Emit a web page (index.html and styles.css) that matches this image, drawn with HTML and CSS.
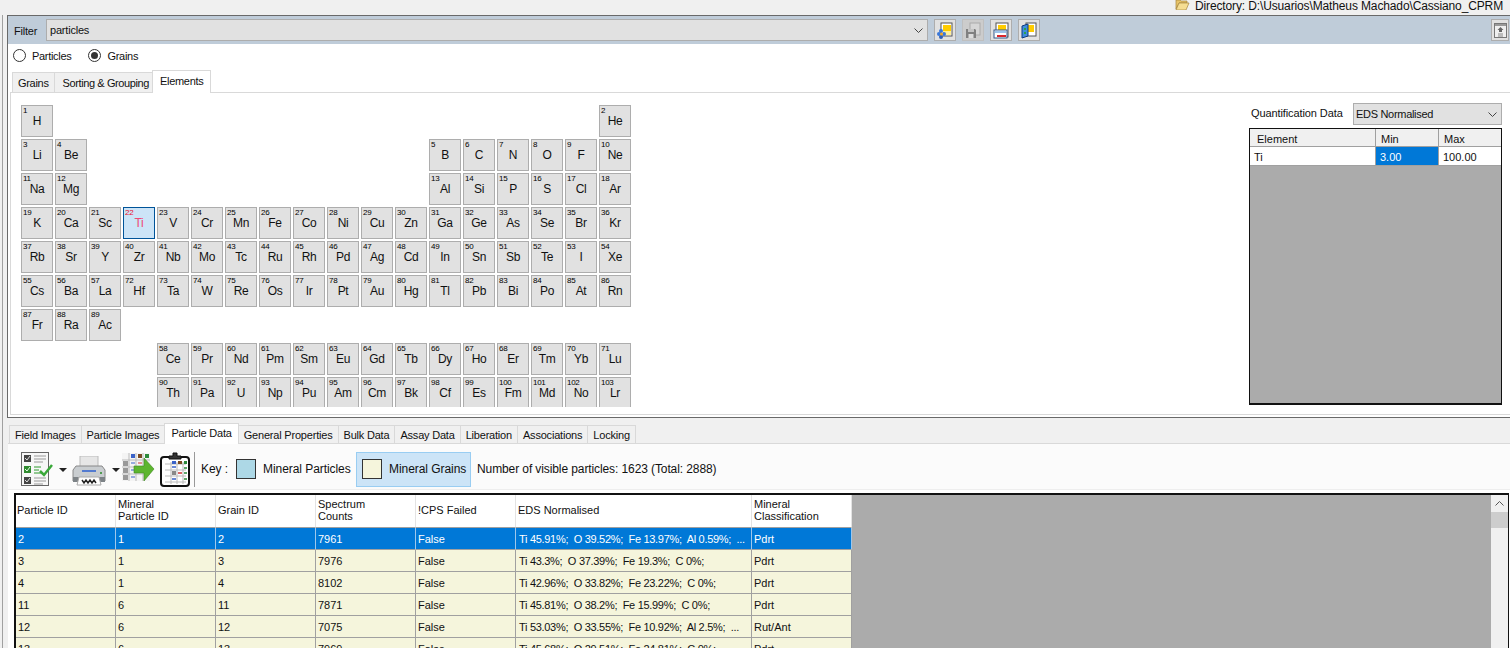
FILE: index.html
```html
<!DOCTYPE html>
<html>
<head>
<meta charset="utf-8">
<title>Particle Data</title>
<link rel="stylesheet" href="styles.css">
</head>
<body>
<div class="topstrip">
  <svg class="folder" width="15" height="10" viewBox="0 0 15 10"><path d="M1 0h4l1 1h6v2H4L1 9z" fill="#e8c468" stroke="#a5853c" stroke-width=".7"/><path d="M1 10l3-7h10l-3 7z" fill="#f5dd92" stroke="#a5853c" stroke-width=".7"/></svg>
  <span>Directory: D:\Usuarios\Matheus Machado\Cassiano_CPRM</span>
</div>
<div class="main">
  <section class="upper">
    <div class="filterbar">
      <span class="filterlabel">Filter</span>
      <div class="combo filtercombo"><span>particles</span>
        <svg class="chev" width="9" height="5" viewBox="0 0 9 5"><path d="M.5.5l4 4 4-4" fill="none" stroke="#444"/></svg>
      </div>
      <button class="toolbtn">
        <svg width="16" height="17" viewBox="0 0 16 17"><rect x="4" y="1" width="11" height="13" fill="#fff" stroke="#555"/><rect x="6" y="3" width="8" height="6" fill="#fc0"/><rect x="6" y="9" width="8" height="4" fill="#fe9"/><circle cx="4" cy="9" r="2" fill="#3a78d8"/><circle cx="7" cy="12" r="2" fill="#3a78d8"/><circle cx="4" cy="15" r="2" fill="#2e5fb8"/><circle cx="2" cy="12" r="2" fill="#3a78d8"/><circle cx="4.500" cy="12" r="1.500" fill="#f6a623"/></svg>
      </button>
      <button class="toolbtn off">
        <svg width="16" height="17" viewBox="0 0 16 17"><rect x="5" y="1" width="10" height="12" fill="#d6d6d6" stroke="#aaa"/><path d="M1 7h9l1 1v8H1z" fill="#808080"/><rect x="3" y="7" width="6" height="3" fill="#c4c4c4"/><rect x="3.500" y="12" width="5" height="4" fill="#ddd"/></svg>
      </button>
      <button class="toolbtn">
        <svg width="16" height="17" viewBox="0 0 16 17"><rect x="3" y="1" width="12" height="14" fill="#fff" stroke="#555"/><rect x="5" y="3" width="8" height="5" fill="#fc0"/><rect x="1" y="8" width="13" height="8" fill="#fff" stroke="#33588c"/><rect x="2" y="9" width="11" height="2" fill="#9cc3ea"/><rect x="4" y="13" width="9" height="2" fill="#d8262c"/></svg>
      </button>
      <button class="toolbtn">
        <svg width="16" height="17" viewBox="0 0 16 17"><rect x="5" y="1" width="10" height="13" fill="#fff" stroke="#555"/><rect x="7" y="3" width="6" height="7" fill="#fc0"/><path d="M1 4l6-2v12l-6 2z" fill="#3f8edc" stroke="#0f3a80"/><rect x="3" y="6" width="2" height="2" fill="#2aa34a"/><rect x="3" y="10" width="2" height="2" fill="#2aa34a"/></svg>
      </button>
      <button class="toolbtn collapse">
        <svg width="13" height="15" viewBox="0 0 13 15"><rect x=".5" y=".5" width="12" height="14" fill="#efefef" stroke="#777"/><rect x="1" y="1" width="11" height="2" fill="#999"/><path d="M6.500 4l3 3H8v2H5V7H3.500z" fill="#666"/><path d="M4 11h5M4 13h5" stroke="#888"/></svg>
      </button>
    </div>

    <div class="radios">
      <label class="radio"><i class="dot"></i>Particles</label>
      <label class="radio"><i class="dot checked"></i>Grains</label>
    </div>

    <div class="tabs uppertabs">
      <span class="tab">Grains</span>
      <span class="tab">Sorting &amp; Grouping</span>
      <span class="tab active">Elements</span>
    </div>

    <div class="page">
      <div class="ptable">
        <div class="ptrow"><b class="el"><i>1</i>H</b><b class="el skip-he"><i>2</i>He</b></div>
        <div class="ptrow"><b class="el"><i>3</i>Li</b><b class="el"><i>4</i>Be</b><b class="el skip-b"><i>5</i>B</b><b class="el"><i>6</i>C</b><b class="el"><i>7</i>N</b><b class="el"><i>8</i>O</b><b class="el"><i>9</i>F</b><b class="el"><i>10</i>Ne</b></div>
        <div class="ptrow"><b class="el"><i>11</i>Na</b><b class="el"><i>12</i>Mg</b><b class="el skip-b"><i>13</i>Al</b><b class="el"><i>14</i>Si</b><b class="el"><i>15</i>P</b><b class="el"><i>16</i>S</b><b class="el"><i>17</i>Cl</b><b class="el"><i>18</i>Ar</b></div>
        <div class="ptrow"><b class="el"><i>19</i>K</b><b class="el"><i>20</i>Ca</b><b class="el"><i>21</i>Sc</b><b class="el picked"><i>22</i>Ti</b><b class="el"><i>23</i>V</b><b class="el"><i>24</i>Cr</b><b class="el"><i>25</i>Mn</b><b class="el"><i>26</i>Fe</b><b class="el"><i>27</i>Co</b><b class="el"><i>28</i>Ni</b><b class="el"><i>29</i>Cu</b><b class="el"><i>30</i>Zn</b><b class="el"><i>31</i>Ga</b><b class="el"><i>32</i>Ge</b><b class="el"><i>33</i>As</b><b class="el"><i>34</i>Se</b><b class="el"><i>35</i>Br</b><b class="el"><i>36</i>Kr</b></div>
        <div class="ptrow"><b class="el"><i>37</i>Rb</b><b class="el"><i>38</i>Sr</b><b class="el"><i>39</i>Y</b><b class="el"><i>40</i>Zr</b><b class="el"><i>41</i>Nb</b><b class="el"><i>42</i>Mo</b><b class="el"><i>43</i>Tc</b><b class="el"><i>44</i>Ru</b><b class="el"><i>45</i>Rh</b><b class="el"><i>46</i>Pd</b><b class="el"><i>47</i>Ag</b><b class="el"><i>48</i>Cd</b><b class="el"><i>49</i>In</b><b class="el"><i>50</i>Sn</b><b class="el"><i>51</i>Sb</b><b class="el"><i>52</i>Te</b><b class="el"><i>53</i>I</b><b class="el"><i>54</i>Xe</b></div>
        <div class="ptrow"><b class="el"><i>55</i>Cs</b><b class="el"><i>56</i>Ba</b><b class="el"><i>57</i>La</b><b class="el"><i>72</i>Hf</b><b class="el"><i>73</i>Ta</b><b class="el"><i>74</i>W</b><b class="el"><i>75</i>Re</b><b class="el"><i>76</i>Os</b><b class="el"><i>77</i>Ir</b><b class="el"><i>78</i>Pt</b><b class="el"><i>79</i>Au</b><b class="el"><i>80</i>Hg</b><b class="el"><i>81</i>Tl</b><b class="el"><i>82</i>Pb</b><b class="el"><i>83</i>Bi</b><b class="el"><i>84</i>Po</b><b class="el"><i>85</i>At</b><b class="el"><i>86</i>Rn</b></div>
        <div class="ptrow"><b class="el"><i>87</i>Fr</b><b class="el"><i>88</i>Ra</b><b class="el"><i>89</i>Ac</b></div>
        <div class="ptrow"><b class="el skip-la"><i>58</i>Ce</b><b class="el"><i>59</i>Pr</b><b class="el"><i>60</i>Nd</b><b class="el"><i>61</i>Pm</b><b class="el"><i>62</i>Sm</b><b class="el"><i>63</i>Eu</b><b class="el"><i>64</i>Gd</b><b class="el"><i>65</i>Tb</b><b class="el"><i>66</i>Dy</b><b class="el"><i>67</i>Ho</b><b class="el"><i>68</i>Er</b><b class="el"><i>69</i>Tm</b><b class="el"><i>70</i>Yb</b><b class="el"><i>71</i>Lu</b></div>
        <div class="ptrow"><b class="el skip-la"><i>90</i>Th</b><b class="el"><i>91</i>Pa</b><b class="el"><i>92</i>U</b><b class="el"><i>93</i>Np</b><b class="el"><i>94</i>Pu</b><b class="el"><i>95</i>Am</b><b class="el"><i>96</i>Cm</b><b class="el"><i>97</i>Bk</b><b class="el"><i>98</i>Cf</b><b class="el"><i>99</i>Es</b><b class="el"><i>100</i>Fm</b><b class="el"><i>101</i>Md</b><b class="el"><i>102</i>No</b><b class="el"><i>103</i>Lr</b></div>
      </div>

      <div class="quant">
        <div class="quanthead">
          <span>Quantification Data</span>
          <div class="combo quantcombo"><span>EDS Normalised</span>
            <svg class="chev" width="9" height="5" viewBox="0 0 9 5"><path d="M.5.5l4 4 4-4" fill="none" stroke="#444"/></svg>
          </div>
        </div>
        <div class="quantgrid">
          <div class="qrow qhead"><span>Element</span><span>Min</span><span>Max</span></div>
          <div class="qrow"><span>Ti</span><span class="sel">3.00</span><span>100.00</span></div>
        </div>
      </div>
    </div>
  </section>

  <section class="lower">
    <div class="tabs lowertabs">
      <span class="tab">Field Images</span>
      <span class="tab">Particle Images</span>
      <span class="tab active">Particle Data</span>
      <span class="tab">General Properties</span>
      <span class="tab">Bulk Data</span>
      <span class="tab">Assay Data</span>
      <span class="tab">Liberation</span>
      <span class="tab">Associations</span>
      <span class="tab">Locking</span>
    </div>
    <div class="lowerpage">
      <div class="toolbar">
        <svg class="ic-check" width="32" height="34" viewBox="0 0 32 34">
          <rect x=".5" y=".5" width="27" height="33" fill="#f7f7f7" stroke="#666"/>
          <rect x="3" y="3" width="7" height="7" fill="#444"/><path d="M4 6l2 2 3-4" stroke="#ddd" fill="none"/>
          <path d="M13 4h12M13 7h12M13 10h9" stroke="#999"/>
          <rect x="3" y="14" width="7" height="7" fill="#2f8a2f"/><path d="M4 17l2 2 3-4" stroke="#e6ffe6" fill="none"/>
          <path d="M13 15h7M13 18h5M13 21h7" stroke="#2c9a2c"/>
          <path d="M19 19l4 4 8-10" stroke="#39a839" stroke-width="2.500" fill="none"/>
          <rect x="3" y="25" width="7" height="7" fill="#444"/><path d="M4 28l2 2 3-4" stroke="#ddd" fill="none"/>
          <path d="M13 26h12M13 29h12M13 32h9" stroke="#999"/>
        </svg>
        <i class="caret first"></i>
        <svg class="ic-print" width="34" height="30" viewBox="0 0 34 30">
          <rect x="8" y="0" width="18" height="11" fill="#e6e6e6" stroke="#bbb"/>
          <path d="M4 10h26l3 4v11H1V14z" fill="#c9cdd0" stroke="#888"/>
          <rect x="1" y="21" width="32" height="5" fill="#7d8387"/>
          <path d="M10 15h14" stroke="#2b5fd0" stroke-width="1.500"/>
          <circle cx="29" cy="17" r="1" fill="#2b8a2b"/>
          <path d="M7 21h20l2 8H5z" fill="#fff" stroke="#aaa"/>
          <path d="M10 24l2 3 2-3 2 3 2-3 2 3 2-3 2 3" stroke="#222" stroke-width="1.500" fill="none"/>
        </svg>
        <i class="caret second"></i>
        <svg class="ic-export" width="33" height="33" viewBox="0 0 33 33">
          <rect x="0" y="0" width="28" height="28" fill="#f4f4f4"/>
          <path d="M0 7h28M0 14h28M0 21h28M7 0v28M14 0v28M21 0v28" stroke="#bbb"/>
          <rect x="9" y="1" width="4" height="4" fill="#3a62c8"/><rect x="16" y="1" width="4" height="4" fill="#7a4a20"/><rect x="23" y="1" width="4" height="4" fill="#2c8a3a"/>
          <rect x="1" y="8" width="5" height="5" fill="#999"/><rect x="1" y="15" width="5" height="5" fill="#999"/><rect x="1" y="22" width="5" height="5" fill="#999"/>
          <path d="M9 10h4M9 17h4M9 24h4" stroke="#3a62c8"/><path d="M16 10h4" stroke="#c33"/>
          <path d="M12 13h10V5l10 11-10 12v-8H12z" fill="#5db52f" stroke="#3d8a1e" stroke-width=".6"/>
        </svg>
        <svg class="ic-clip" width="30" height="35" viewBox="0 0 30 35">
          <rect x="1" y="5" width="28" height="29" rx="3" fill="#fff" stroke="#111" stroke-width="2"/>
          <path d="M9 6V4h4V1h4v3h4v3H9z" fill="#333" stroke="#111"/>
          <path d="M5 12h21M5 18h21M5 24h21M5 30h21M11 10v22M17 10v22M23 10v22" stroke="#bbb"/>
          <rect x="12" y="9" width="4" height="3" fill="#3a62c8"/><rect x="18" y="9" width="4" height="3" fill="#7a4a20"/><rect x="24" y="9" width="3" height="3" fill="#2c8a3a"/>
          <rect x="12" y="19" width="4" height="4" fill="#888"/><path d="M18 21h4" stroke="#c33" stroke-width="1.500"/><path d="M12 27h4M12 15h4" stroke="#3a62c8" stroke-width="1.500"/><path d="M24 16h3M24 21h3M24 27h3" stroke="#2c8a3a" stroke-width="1.500"/>
        </svg>
        <i class="sep"></i>
        <span class="keylabel">Key :</span>
        <div class="keyitem"><i class="swatch blue"></i><span>Mineral Particles</span></div>
        <div class="keyitem hot"><i class="swatch beige"></i><span>Mineral Grains</span></div>
        <span class="counts">Number of visible particles: 1623 (Total: 2888)</span>
      </div>

      <div class="gridwrap">
        <table class="grid">
          <colgroup><col class="w100"><col class="w100"><col class="w100"><col class="w100"><col class="w100"><col class="w236"><col class="w100"></colgroup>
          <thead>
            <tr><th>Particle ID</th><th>Mineral<br>Particle ID</th><th>Grain ID</th><th>Spectrum<br>Counts</th><th>!CPS Failed</th><th>EDS Normalised</th><th>Mineral<br>Classification</th></tr>
          </thead>
          <tbody>
            <tr class="selrow"><td>2</td><td>1</td><td>2</td><td>7961</td><td>False</td><td class="eds">Ti 45.91%;&nbsp; O 39.52%;&nbsp; Fe 13.97%;&nbsp; Al 0.59%;&nbsp; ...</td><td>Pdrt</td></tr>
            <tr><td>3</td><td>1</td><td>3</td><td>7976</td><td>False</td><td class="eds">Ti 43.3%;&nbsp; O 37.39%;&nbsp; Fe 19.3%;&nbsp; C 0%;</td><td>Pdrt</td></tr>
            <tr><td>4</td><td>1</td><td>4</td><td>8102</td><td>False</td><td class="eds">Ti 42.96%;&nbsp; O 33.82%;&nbsp; Fe 23.22%;&nbsp; C 0%;</td><td>Pdrt</td></tr>
            <tr><td>11</td><td>6</td><td>11</td><td>7871</td><td>False</td><td class="eds">Ti 45.81%;&nbsp; O 38.2%;&nbsp; Fe 15.99%;&nbsp; C 0%;</td><td>Pdrt</td></tr>
            <tr><td>12</td><td>6</td><td>12</td><td>7075</td><td>False</td><td class="eds">Ti 53.03%;&nbsp; O 33.55%;&nbsp; Fe 10.92%;&nbsp; Al 2.5%;&nbsp; ...</td><td>Rut/Ant</td></tr>
            <tr><td>13</td><td>6</td><td>13</td><td>7969</td><td>False</td><td class="eds">Ti 45.68%;&nbsp; O 29.51%;&nbsp; Fe 24.81%;&nbsp; C 0%;</td><td>Pdrt</td></tr>
          </tbody>
        </table>
        <div class="vscroll">
          <svg width="9" height="5" viewBox="0 0 9 5"><path d="M.5 4.500l4-4 4 4" fill="none" stroke="#555"/></svg>
          <i class="thumb"></i>
        </div>
      </div>
    </div>
  </section>
</div>
</body>
</html>
```

FILE: styles.css
```css
* {
  margin: 0;
  padding: 0;
  box-sizing: border-box;
}
html, body {
  width: 1510px;
  height: 648px;
  overflow: hidden;
}
body {
  background: #f0f0f0;
  font-family: "Liberation Sans", Arial, sans-serif;
  font-size: 11px;
  color: #111;
  display: flex;
  flex-direction: column;
}
i, b {
  font-style: normal;
  font-weight: normal;
}

/* top strip */
.topstrip {
  height: 15px;
  display: flex;
  justify-content: flex-end;
  align-items: center;
  gap: 5px;
  padding-right: 7px;
  font-size: 12px;
  line-height: 11px;
  letter-spacing: -0.13px;
  overflow: hidden;
}
.folder {
  margin-bottom: 5px;
}
.topstrip span {
  margin-bottom: 3px;
}

.main {
  flex: 1;
  min-height: 0;
  margin-left: 2px;
  padding-left: 4px;
  border-left: 1px solid #a0a0a0;
  display: flex;
  flex-direction: column;
}

/* upper panel */
.upper {
  height: 403px;
  flex: none;
  background: #fff;
  border: 1px solid #696969;
  border-right: 0;
  display: flex;
  flex-direction: column;
}
.filterbar {
  height: 28px;
  flex: none;
  background: #bfccd9;
  display: flex;
  align-items: flex-start;
  padding: 3px 1px 0 6px;
}
.filterlabel {
  width: 32px;
  padding-top: 6px;
  letter-spacing: -0.2px;
}
.combo {
  height: 22px;
  background: #e1e1e1;
  border: 1px solid #adadad;
  display: flex;
  align-items: center;
  justify-content: space-between;
  padding: 0 4px 0 2px;
}
.filtercombo {
  width: 882px;
  margin-right: 6px;
  letter-spacing: -0.2px;
}
.filtercombo span {
  margin-bottom: 1px;
  margin-left: 1px;
}
.toolbtn {
  width: 22px;
  height: 22px;
  margin-right: 6px;
  background: #e1e1e1;
  border: 1px solid #adadad;
  display: flex;
  align-items: center;
  justify-content: center;
}
.toolbtn.off {
  background: #ccc;
  border-color: #bfbfbf;
}
.toolbtn.collapse {
  width: 18px;
  margin: 0 0 0 auto;
}

.radios {
  height: 25px;
  flex: none;
  display: flex;
  align-items: center;
  padding: 0 0 2px 5px;
  letter-spacing: -0.3px;
}
.radio {
  display: flex;
  align-items: center;
  gap: 6px;
  margin-right: 17px;
}
.dot {
  width: 13px;
  height: 13px;
  border: 1px solid #333;
  border-radius: 50%;
  background: #fff;
  display: flex;
  align-items: center;
  justify-content: center;
}
.dot.checked::after {
  content: "";
  width: 7px;
  height: 7px;
  border-radius: 50%;
  background: #333;
}

/* tabs */
.tabs {
  display: flex;
  align-items: flex-end;
  flex: none;
  letter-spacing: -0.3px;
}
.tab {
  height: 20px;
  padding: 4px 5px 0;
  background: #f0f0f0;
  border: 1px solid #d9d9d9;
  border-bottom: 0;
  border-left: 0;
  white-space: nowrap;
}
.tab:first-child {
  border-left: 1px solid #d9d9d9;
}
.tab.active {
  height: 23px;
  padding: 4px 7px 0;
  margin-left: -1px;
  background: #fff;
  border-left: 1px solid #d9d9d9;
  position: relative;
  top: 1px;
}
.uppertabs {
  height: 23px;
  padding-left: 4px;
}
.uppertabs .tab:nth-child(2) {
  padding: 4px 3px 0 8px;
  letter-spacing: -0.4px;
}
.page {
  flex: 1;
  margin: 0 0 2px 2px;
  min-height: 0;
  border: 1px solid #d9d9d9;
  border-right: 0;
  display: flex;
  justify-content: space-between;
  padding: 12px 8px 0 10px;
}

/* periodic table */
.ptable {
  height: 302px;
  overflow: hidden;
  display: flex;
  flex-direction: column;
  gap: 2px;
}
.ptrow {
  display: flex;
  gap: 2px;
  flex: none;
  height: 32px;
}
.el {
  width: 32px;
  height: 32px;
  position: relative;
  background: #e1e1e1;
  border: 1px solid #adadad;
  display: flex;
  align-items: center;
  justify-content: center;
  font-size: 12px;
  letter-spacing: -0.3px;
}
.el i {
  position: absolute;
  left: 1px;
  top: 1px;
  font-size: 8px;
  line-height: 8px;
  color: #000;
}
.el.picked {
  background: #cce4f7;
  border-color: #005499;
  color: #ee4a76;
}
.el.picked i {
  color: #e8112d;
}
.skip-he {
  margin-left: 544px;
}
.skip-b {
  margin-left: 340px;
}
.skip-la {
  margin-left: 136px;
}

/* quantification */
.quant {
  width: 253px;
}
.quanthead {
  display: flex;
  align-items: center;
  justify-content: space-between;
  padding-left: 2px;
  margin-top: -2px;
  height: 22px;
}
.quanthead > span {
  margin-bottom: 2px;
  letter-spacing: -0.1px;
}
.quantcombo {
  width: 149px;
  letter-spacing: -0.3px;
}
.quantgrid {
  margin-top: 3px;
  width: 253px;
  height: 277px;
  background: #ababab;
  border: 2px solid #111;
  border-width: 1px 1px 2px 1px;
}
.qrow {
  display: grid;
  grid-template-columns: 125px 63px 63px;
  background: #fff;
  height: 19px;
  border-bottom: 1px solid #a0a0a0;
  align-items: stretch;
}
.qrow span {
  padding: 4px 4px 0;
}
.qrow span + span {
  border-left: 1px solid #a0a0a0;
}
.qhead {
  background: #f0f0f0;
  height: 18px;
}
.qhead span:first-child {
  padding-left: 7px;
}
.qhead span + span {
  padding-left: 5px;
}
.qrow .sel {
  background: #0078d7;
  color: #fff;
}

/* lower panel */
.lower {
  flex: 1;
  min-height: 0;
  display: flex;
  flex-direction: column;
  padding: 5px 0 0 1px;
}
.lowertabs {
  height: 20px;
  padding-left: 1px;
  letter-spacing: -0.2px;
}
.lowertabs .tab {
  height: 18px;
  padding-top: 3px;
}
.lowertabs .tab.active {
  height: 21px;
  padding-left: 6px;
  padding-right: 6px;
}
.lowerpage {
  flex: 1;
  min-height: 0;
  background: #fff;
  border-top: 1px solid #d9d9d9;
  display: flex;
  flex-direction: column;
}
.toolbar {
  height: 46px;
  flex: none;
  background: #fbfbfb;
  border-bottom: 1px solid #eee;
  display: flex;
  align-items: center;
  padding: 5px 0 0 13px;
  font-size: 12px;
  letter-spacing: -0.06px;
}
.caret {
  width: 0;
  height: 0;
  border: 4px solid transparent;
  border-top-color: #222;
  border-bottom: 0;
  margin-top: 1px;
}
.caret.first {
  margin-left: 6px;
  margin-right: 5px;
}
.caret.second {
  margin-left: 6px;
  margin-right: 2px;
}
.ic-print {
  margin-top: 4px;
}
.ic-export {
  margin-right: 5px;
}
.sep {
  width: 1px;
  height: 35px;
  background: #999;
  margin: 0 6px 0 4px;
}
.keylabel {
  width: 30px;
}
.keyitem {
  height: 35px;
  display: flex;
  align-items: center;
  gap: 7px;
  padding: 0 0 0 4px;
  width: 125px;
  border: 1px solid transparent;
}
.keyitem.hot {
  background: #cce4f7;
  border-color: #99cdf2;
  width: 115px;
  padding-left: 5px;
}
.swatch {
  width: 20px;
  height: 20px;
  border: 1px solid #333;
}
.swatch.blue {
  background: #add8e6;
}
.swatch.beige {
  background: #f5f5dc;
}
.counts {
  margin-left: 6px;
  letter-spacing: -0.1px;
}

/* data grid */
.gridwrap {
  flex: 1;
  min-height: 0;
  margin: 3px 1px 0 6px;
  background: #ababab;
  border-top: 2px solid #111;
  border-left: 2px solid #111;
  border-right: 1px solid #111;
  display: flex;
  justify-content: space-between;
  overflow: hidden;
}
.grid {
  table-layout: fixed;
  border-collapse: separate;
  border-spacing: 0;
  width: 836px;
  height: max-content;
  background: #f5f5dc;
}
.w100 {
  width: 100px;
}
.w236 {
  width: 236px;
}
.grid th {
  height: 33px;
  background: #fff;
  font-weight: normal;
  text-align: left;
  line-height: 12px;
  padding: 0 2px 2px;
  border-right: 1px solid #e3e3e3;
  border-bottom: 1px solid #a0a0a0;
  vertical-align: middle;
}
.grid th:first-child {
  padding-left: 1px;
}
.grid td {
  height: 22px;
  padding: 1px 3px 0 2px;
  border-right: 1px solid #a0a0a0;
  border-bottom: 1px solid #a0a0a0;
  white-space: nowrap;
  overflow: hidden;
}
.grid td.eds {
  letter-spacing: -0.3px;
  padding-left: 3px;
}
.selrow td {
  background: #0078d7;
  color: #fff;
  border-bottom-color: #a0a0a0;
  border-right-color: #9fc7ea;
}
.vscroll {
  width: 17px;
  background: #f0f0f0;
  display: flex;
  flex-direction: column;
  align-items: center;
  padding-top: 6px;
}
.thumb {
  width: 100%;
  height: 16px;
  margin-top: 6px;
  background: #cdcdcd;
}
```
